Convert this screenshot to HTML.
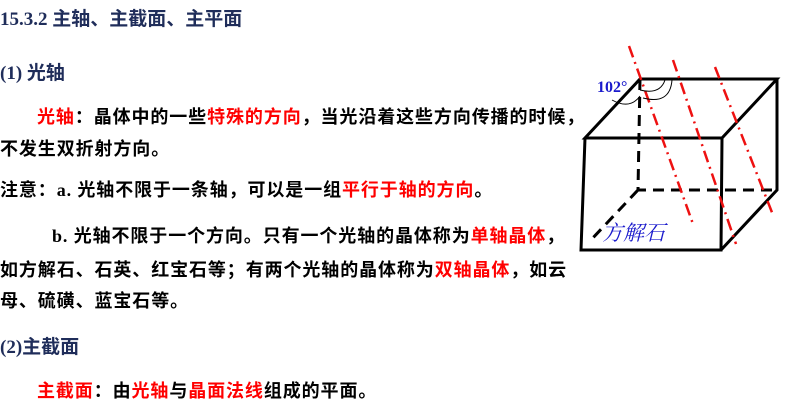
<!DOCTYPE html>
<html><head><meta charset="utf-8"><style>
body{margin:0;width:810px;height:413px;background:#fff;overflow:hidden;position:relative;font-family:"Liberation Serif","Noto Sans CJK SC",sans-serif;}
.l{position:absolute;white-space:nowrap;font-weight:bold;font-size:18px;letter-spacing:0.9px;color:#000;font-family:"Liberation Serif","Noto Sans CJK SC",sans-serif;line-height:22px;}
.h{color:#1f2d5a;}
.r{color:#ff0000;}
</style></head><body>
<div class="l h" style="left:0;top:9px;font-size:19px;letter-spacing:0">15.3.2 主轴、主截面、主平面</div>
<div class="l h" style="left:0;top:63px;font-size:19px;letter-spacing:0">(1) 光轴</div>
<div class="l" style="left:37px;top:106px"><span class="r">光轴</span>：晶体中的一些<span class="r">特殊的方向</span>，当光沿着这些方向传播的时候，</div>
<div class="l" style="left:0;top:138px">不发生双折射方向。</div>
<div class="l" style="left:0;top:179px">注意：a. 光轴不限于一条轴，可以是一组<span class="r">平行于轴的方向</span>。</div>
<div class="l" style="left:52px;top:225px">b. 光轴不限于一个方向。只有一个光轴的晶体称为<span class="r">单轴晶体</span>，</div>
<div class="l" style="left:0;top:259px">如方解石、石英、红宝石等；有两个光轴的晶体称为<span class="r">双轴晶体</span>，如云</div>
<div class="l" style="left:0;top:290px">母、硫磺、蓝宝石等。</div>
<div class="l h" style="left:0;top:337px;font-size:19px;letter-spacing:0">(2)主截面</div>
<div class="l" style="left:37px;top:380px"><span class="r">主截面</span>：由<span class="r">光轴</span>与<span class="r">晶面法线</span>组成的平面。</div>
<svg style="position:absolute;left:0;top:0" width="810" height="413">
<g stroke="#000" stroke-width="3" fill="none">
<path d="M585 138 L640 79 L777 79 L722 138 Z"/>
<path d="M585 138 L581 250 L721 250 L722 138"/>
<path d="M777 79 L777 190 L721 250"/>
<path d="M640 79 L638 190 L777 190 M638 190 L590 241" stroke-dasharray="11 7"/>
</g>
<g stroke="#ee1111" stroke-width="2.5" stroke-dasharray="12 5 2 5">
<path d="M629 46 L693 224"/><path d="M673 60 L736 244"/><path d="M715 67 L773 215"/>
</g>
<g stroke="#000" stroke-width="1" fill="none">
<path d="M612 100 Q630 110 640 96"/><path d="M640 90 Q660 95 665 80"/><path d="M643 98 Q670 105 672 80"/>
</g>
<text x="597" y="92" fill="#1a1acc" font-weight="bold" font-size="16" font-family="Liberation Serif">102°</text>
<text x="602" y="240" fill="#1a1acc" font-style="italic" font-size="21" font-family="Liberation Serif,Noto Serif CJK SC,serif">方解石</text>
</svg>
</body></html>
